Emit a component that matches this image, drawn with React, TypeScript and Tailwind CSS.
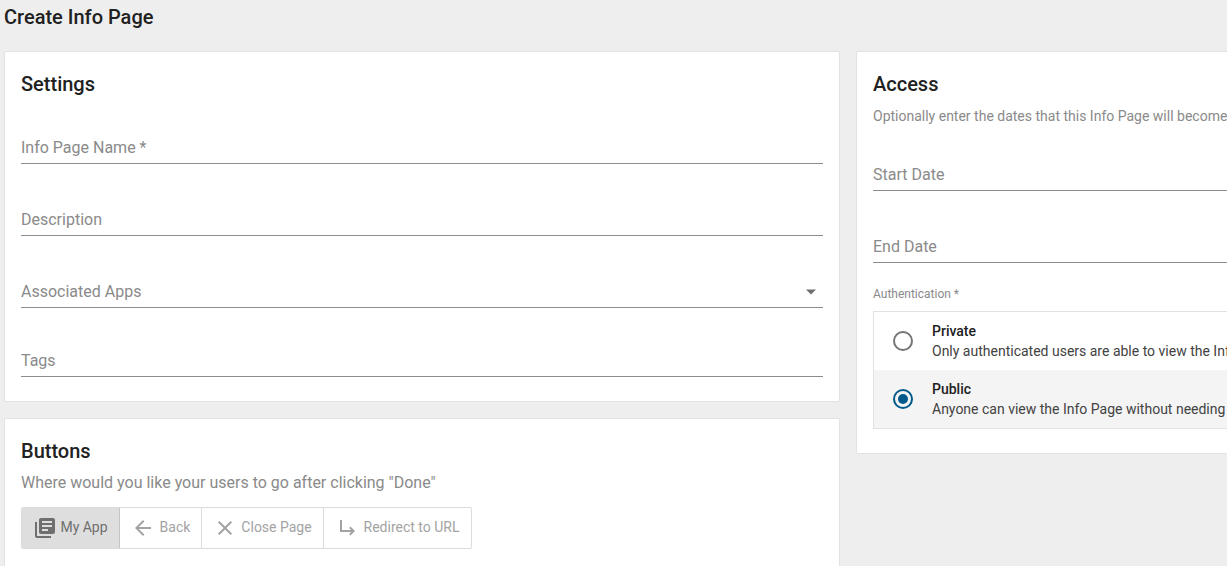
import React from "react";

function Field({ label, className, arrow }: { label: string; className: string; arrow?: boolean }) {
  return (
    <div className={`relative flex h-[48px] items-center border-b border-[#8c8c8c] pt-[17px] ${className}`}>
      <span className="text-[16px] leading-[24px] text-[#8a8a8a]">{label}</span>
      {arrow && (
        <svg className="absolute right-[6px] top-[29px]" width="12" height="6" viewBox="0 0 12 6">
          <path d="M1 0.5h10L6 5.5z" fill="#6f6f6f" />
        </svg>
      )}
    </div>
  );
}

function ButtonOption({ children, label, width, active }: { children: React.ReactNode; label: string; width: string; active?: boolean }) {
  return (
    <div className={`flex h-full items-center justify-center border-r border-[#dcdcdc] last:border-r-0 ${width} ${active ? "bg-[#dedede] text-[#6f6f6f] border-r-[#c4c4c4]" : "text-[#a3a3a3]"}`}>
      {children}
      <span className="mb-[2px] text-[14px] leading-[20px]">{label}</span>
    </div>
  );
}

export default function App() {
  return (
    <div className="h-[566px] w-[1227px] overflow-hidden bg-[#eeeeee] font-['Roboto',sans-serif]">
      <div className="w-[1700px] pl-[4px]">
        <h1 className="h-[51px] pt-[4px] text-[20px] font-medium leading-[26px] text-[#212121]">Create Info Page</h1>
        <div className="flex items-start gap-[16px]">
          <div className="flex w-[836px] flex-col gap-[16px]">
            <section className="h-[351px] rounded-[2px] border border-[#e2e2e2] bg-white px-[16px] pt-[16px]">
              <h2 className="h-[32px] text-[20px] font-medium leading-[32px] text-[#212121]">Settings</h2>
              <Field label="Info Page Name *" className="mt-[16px]" />
              <Field label="Description" className="mt-[24px]" />
              <Field label="Associated Apps" className="mt-[24px]" arrow />
              <Field label="Tags" className="mt-[21px]" />
            </section>
            <section className="h-[200px] rounded-[2px] border border-[#e2e2e2] bg-white px-[16px] pt-[16px]">
              <h2 className="h-[32px] text-[20px] font-medium leading-[32px] text-[#212121]">Buttons</h2>
              <p className="mt-[4px] text-[16px] leading-[24px] text-[#8a8a8a]">Where would you like your users to go after clicking "Done"</p>
              <div className="mt-[12px] flex h-[42px] w-[451px] overflow-hidden rounded-[2px] border border-[#dcdcdc]">
                <ButtonOption label="My App" width="w-[98px] gap-[3px]" active>
                  <svg width="24" height="24" viewBox="0 0 24 24" fill="#6f6f6f"><path d="M4 6H2v14c0 1.100.9 2 2 2h14v-2H4V6zm16-4H8c-1.100 0-2 .9-2 2v12c0 1.100.9 2 2 2h12c1.100 0 2-.9 2-2V4c0-1.100-.9-2-2-2zm-1 9H9V9h10v2zm-4 4H9v-2h6v2zm4-8H9V5h10v2z" /></svg>
                </ButtonOption>
                <ButtonOption label="Back" width="w-[82px] gap-[5px]">
                  <svg width="24" height="24" viewBox="0 0 24 24" fill="#a3a3a3"><path d="M20 11H7.830l5.590-5.590L12 4l-8 8 8 8 1.410-1.410L7.830 13H20v-2z" /></svg>
                </ButtonOption>
                <ButtonOption label="Close Page" width="w-[122px] gap-[4px]">
                  <svg width="24" height="24" viewBox="0 0 24 24" fill="#a3a3a3"><path d="M19 6.410 17.590 5 12 10.590 6.410 5 5 6.410 10.590 12 5 17.590 6.410 19 12 13.410 17.590 19 19 17.590 13.410 12z" /></svg>
                </ButtonOption>
                <ButtonOption label="Redirect to URL" width="flex-1 gap-[4px]">
                  <svg width="24" height="24" viewBox="0 0 24 24" fill="#a3a3a3"><path d="M19 15l-4.500 4.500-1.420-1.420L15.170 16H4V4h2v10h9.170l-2.090-2.080 1.420-1.420z" /></svg>
                </ButtonOption>
              </div>
            </section>
          </div>
          <section className="h-[403px] w-[836px] rounded-[2px] border border-[#e2e2e2] bg-white px-[16px] pt-[16px]">
            <h2 className="h-[32px] text-[20px] font-medium leading-[32px] text-[#212121]">Access</h2>
            <p className="mt-[6px] text-[14px] leading-[20px] text-[#8a8a8a]">Optionally enter the dates that this Info Page will become available to your users.</p>
            <Field label="Start Date" className="mt-[17px]" />
            <Field label="End Date" className="mt-[24px]" />
            <div className="mt-[23px] text-[12px] leading-[16px] text-[#8a8a8a]">Authentication *</div>
            <div className="mt-[9px] border border-[#e2e2e2]">
              <div className="flex h-[58px] items-center pl-[19px]">
                <span className="h-[20px] w-[20px] rounded-full border-2 border-[#757575]" />
                <div className="ml-[19px] text-[14px] leading-[20px]">
                  <div className="font-medium text-[#212121]">Private</div>
                  <div className="text-[#424242]">Only authenticated users are able to view the Info Page</div>
                </div>
              </div>
              <div className="flex h-[58px] items-center bg-[#f4f4f4] pl-[19px]">
                <span className="flex h-[20px] w-[20px] items-center justify-center rounded-full border-2 border-[#005a8c]">
                  <span className="h-[10px] w-[10px] rounded-full bg-[#005a8c]" />
                </span>
                <div className="ml-[19px] text-[14px] leading-[20px]">
                  <div className="font-medium text-[#212121]">Public</div>
                  <div className="text-[#424242]">Anyone can view the Info Page without needing to log in</div>
                </div>
              </div>
            </div>
          </section>
        </div>
      </div>
    </div>
  );
}
